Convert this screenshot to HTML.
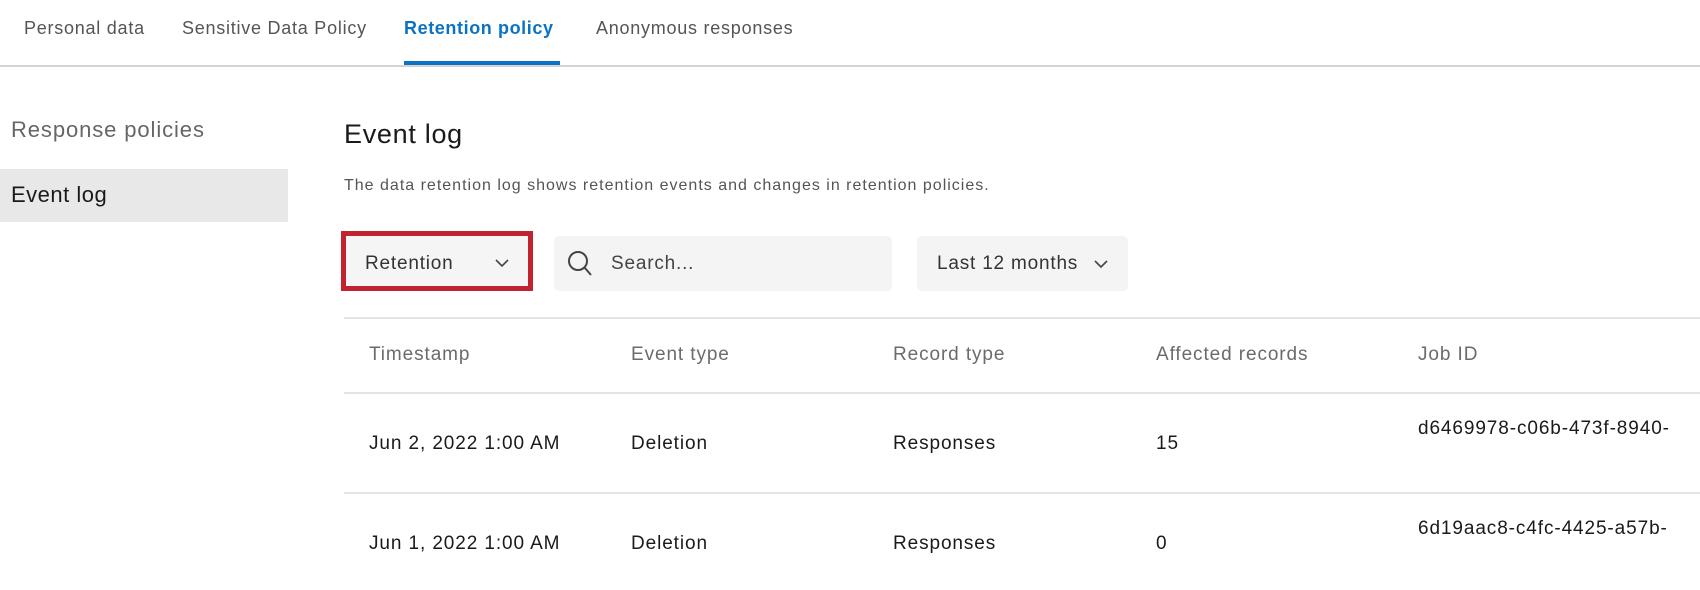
<!DOCTYPE html>
<html><head><meta charset="utf-8"><style>
body{margin:0;width:1700px;height:590px;background:#fff;font-family:"Liberation Sans",Arial,sans-serif;position:relative;overflow:hidden}
.a{position:absolute;white-space:nowrap}
.tab{font-size:18px;color:#555;top:18px;letter-spacing:0.75px}
.h{font-size:19px;color:#6b6b6b;top:344px;letter-spacing:0.9px}
.c{font-size:19px;color:#1a1a1a;letter-spacing:0.9px}
.line{position:absolute;left:344px;right:0;height:2px;background:#e4e4e4}
</style></head><body>
<div class="a tab" style="left:24px">Personal data</div>
<div class="a tab" style="left:182px">Sensitive Data Policy</div>
<div class="a tab" style="left:404px;color:#0b72c4;font-weight:bold;letter-spacing:0.6px">Retention policy</div>
<div class="a tab" style="left:596px">Anonymous responses</div>
<div class="a" style="left:404px;top:61px;width:156px;height:4px;background:#0b72c4"></div>
<div class="a" style="left:0;top:65px;width:1700px;height:2px;background:#d4d4d4"></div>

<div class="a" style="left:11px;top:117px;font-size:22px;color:#666;letter-spacing:0.9px">Response policies</div>
<div class="a" style="left:0;top:169px;width:288px;height:53px;background:#e8e8e8"></div>
<div class="a" style="left:11px;top:182px;font-size:22px;color:#1a1a1a;letter-spacing:0.5px">Event log</div>

<div class="a" style="left:344px;top:119px;font-size:27px;color:#1a1a1a;letter-spacing:0.7px">Event log</div>
<div class="a" style="left:344px;top:177px;font-size:16px;color:#555;letter-spacing:1px">The data retention log shows retention events and changes in retention policies.</div>

<div class="a" style="left:341px;top:231px;width:182px;height:50px;border:5px solid #c0222f;background:#f5f5f5"></div>
<div class="a" style="left:365px;top:253px;font-size:19px;color:#333;letter-spacing:0.8px">Retention</div>
<svg class="a" style="left:494px;top:258px" width="16" height="10"><path d="M2 2 L8 8 L14 2" fill="none" stroke="#444" stroke-width="1.6"/></svg>

<div class="a" style="left:554px;top:236px;width:338px;height:55px;background:#f4f4f4;border-radius:5px"></div>
<svg class="a" style="left:566px;top:249px" width="32" height="32"><circle cx="12" cy="12" r="9" fill="none" stroke="#444" stroke-width="2"/><path d="M18.5 18.5 L25 26" stroke="#444" stroke-width="2"/></svg>
<div class="a" style="left:611px;top:253px;font-size:19px;color:#444;letter-spacing:0.8px">Search...</div>

<div class="a" style="left:917px;top:236px;width:211px;height:55px;background:#f4f4f4;border-radius:5px"></div>
<div class="a" style="left:937px;top:253px;font-size:19px;color:#333;letter-spacing:0.8px">Last 12 months</div>
<svg class="a" style="left:1093px;top:259px" width="16" height="10"><path d="M2 2 L8 8 L14 2" fill="none" stroke="#444" stroke-width="1.6"/></svg>

<div class="line" style="top:317px"></div>
<div class="a h" style="left:369px">Timestamp</div>
<div class="a h" style="left:631px">Event type</div>
<div class="a h" style="left:893px">Record type</div>
<div class="a h" style="left:1156px">Affected records</div>
<div class="a h" style="left:1418px">Job ID</div>
<div class="line" style="top:392px"></div>

<div class="a c" style="left:369px;top:433px">Jun 2, 2022 1:00 AM</div>
<div class="a c" style="left:631px;top:433px">Deletion</div>
<div class="a c" style="left:893px;top:433px">Responses</div>
<div class="a c" style="left:1156px;top:433px">15</div>
<div class="a c" style="left:1418px;top:418px">d6469978-c06b-473f-8940-</div>
<div class="line" style="top:492px"></div>

<div class="a c" style="left:369px;top:533px">Jun 1, 2022 1:00 AM</div>
<div class="a c" style="left:631px;top:533px">Deletion</div>
<div class="a c" style="left:893px;top:533px">Responses</div>
<div class="a c" style="left:1156px;top:533px">0</div>
<div class="a c" style="left:1418px;top:518px">6d19aac8-c4fc-4425-a57b-</div>
</body></html>
